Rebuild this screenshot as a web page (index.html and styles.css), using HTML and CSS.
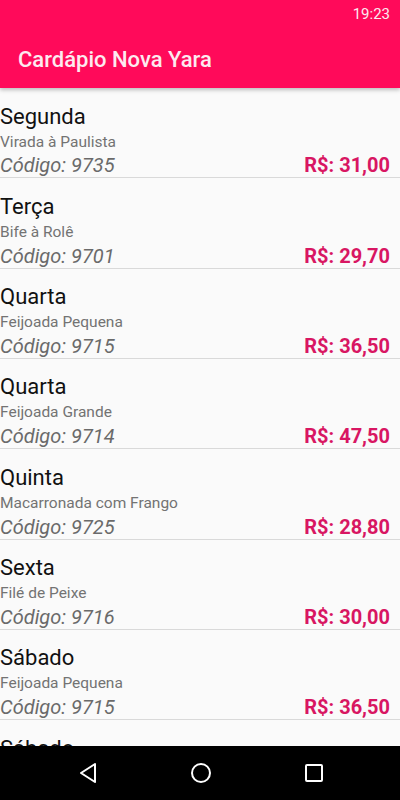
FILE: index.html
```html
<!DOCTYPE html>
<html lang="pt-BR">
<head>
<meta charset="utf-8">
<title>Cardápio Nova Yara</title>
<link rel="stylesheet" href="styles.css">
</head>
<body>
<div class="screen">
  <header class="appbar">
    <div class="status"><span class="time">19:23</span></div>
    <h1 class="title">Cardápio Nova Yara</h1>
  </header>
  <main class="list">
    <div class="item">
      <div class="day">Segunda</div>
      <div class="dish">Virada à Paulista</div>
      <div class="row"><span class="code">Código: 9735</span><span class="price">R$: 31,00</span></div>
    </div>
    <div class="item">
      <div class="day">Terça</div>
      <div class="dish">Bife à Rolê</div>
      <div class="row"><span class="code">Código: 9701</span><span class="price">R$: 29,70</span></div>
    </div>
    <div class="item">
      <div class="day">Quarta</div>
      <div class="dish">Feijoada Pequena</div>
      <div class="row"><span class="code">Código: 9715</span><span class="price">R$: 36,50</span></div>
    </div>
    <div class="item">
      <div class="day">Quarta</div>
      <div class="dish">Feijoada Grande</div>
      <div class="row"><span class="code">Código: 9714</span><span class="price">R$: 47,50</span></div>
    </div>
    <div class="item">
      <div class="day">Quinta</div>
      <div class="dish">Macarronada com Frango</div>
      <div class="row"><span class="code">Código: 9725</span><span class="price">R$: 28,80</span></div>
    </div>
    <div class="item">
      <div class="day">Sexta</div>
      <div class="dish">Filé de Peixe</div>
      <div class="row"><span class="code">Código: 9716</span><span class="price">R$: 30,00</span></div>
    </div>
    <div class="item">
      <div class="day">Sábado</div>
      <div class="dish">Feijoada Pequena</div>
      <div class="row"><span class="code">Código: 9715</span><span class="price">R$: 36,50</span></div>
    </div>
    <div class="item">
      <div class="day">Sábado</div>
      <div class="dish">Feijoada Grande</div>
      <div class="row"><span class="code">Código: 9714</span><span class="price">R$: 47,50</span></div>
    </div>
  </main>
  <nav class="navbar">
    <svg class="nav-icon" width="20" height="22" viewBox="0 0 20 22"><path d="M17 2 L3 11 L17 20 Z" fill="none" stroke="#fff" stroke-width="2" stroke-linejoin="round"/></svg>
    <svg class="nav-icon" width="22" height="22" viewBox="0 0 22 22"><circle cx="11" cy="11" r="9" fill="none" stroke="#fff" stroke-width="2"/></svg>
    <svg class="nav-icon" width="20" height="20" viewBox="0 0 20 20"><rect x="2" y="2" width="16" height="16" rx="1" fill="none" stroke="#fff" stroke-width="2"/></svg>
  </nav>
</div>
</body>
</html>
```
FILE: styles.css
```css
* { box-sizing: border-box; }
html, body { margin: 0; padding: 0; }
body {
  font-family: Roboto, "Noto Sans", "Liberation Sans", sans-serif;
  background: #fafafa;
}
.screen {
  width: 400px;
  height: 800px;
  display: flex;
  flex-direction: column;
  overflow: hidden;
}
.appbar {
  flex: 0 0 88px;
  background: #ff0a5a;
  color: #fff;
  box-shadow: 0 2px 4px rgba(0,0,0,0.25);
  position: relative;
  z-index: 1;
  display: flex;
  flex-direction: column;
}
.status {
  height: 26px;
  display: flex;
  justify-content: flex-end;
  align-items: center;
  padding: 2px 10px 0 0;
}
.time {
  font-size: 15px;
  color: #fbe9ef;
}
.title {
  margin: 0;
  padding: 0 0 0 18px;
  font-size: 22px;
  font-weight: 500;
  line-height: 26px;
  margin-top: 21px;
  color: #fdeaf0;
}
.list {
  flex: 1;
  overflow: hidden;
}
.item {
  padding: 15.5px 10px 0 0;
  border-bottom: 1px solid #d9d9d9;
}
.day {
  font-size: 22px;
  line-height: 26px;
  color: #111;
}
.dish {
  font-size: 15.5px;
  line-height: 24px;
  color: #737373;
}
.row {
  display: flex;
  justify-content: space-between;
  align-items: center;
  height: 23.83px;
}
.code {
  font-size: 20px;
  font-style: italic;
  color: #6a6a6a;
}
.price {
  font-size: 20px;
  font-weight: 700;
  color: #d81662;
}
.navbar {
  flex: 0 0 54px;
  background: #000;
  display: flex;
  align-items: center;
  padding: 0 0 0 78px;
}
.nav-icon { display: block; }
.nav-icon:nth-child(1) { margin-right: 92px; }
.nav-icon:nth-child(2) { margin-right: 92px; }
```
